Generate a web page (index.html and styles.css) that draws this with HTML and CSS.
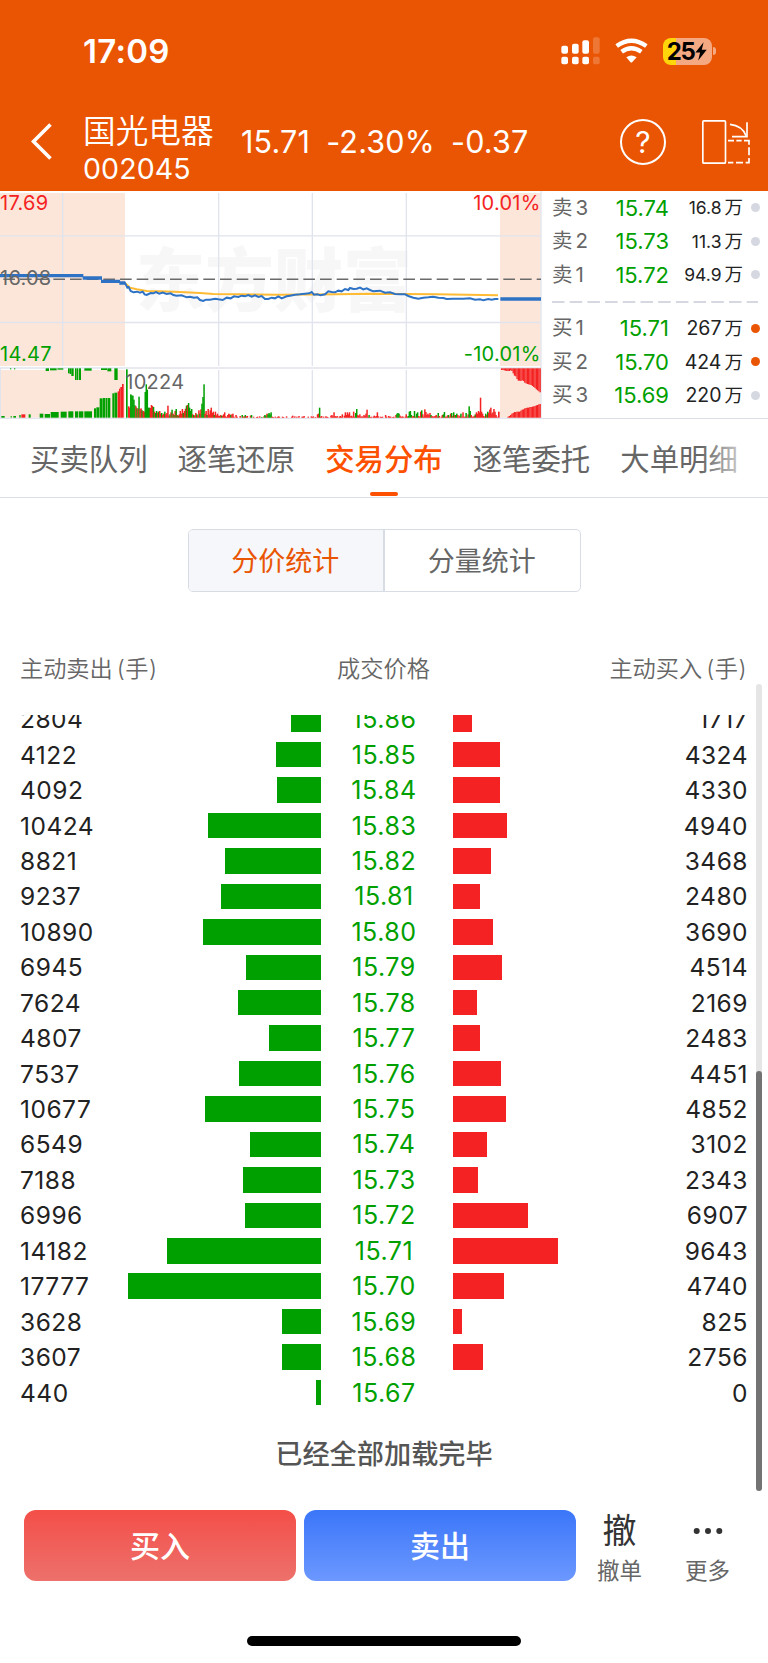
FILE: index.html
```html
<!DOCTYPE html>
<html lang="zh-CN">
<head>
  <meta charset="UTF-8" />
  <meta name="viewport" content="width=device-width, initial-scale=1.0" />
  <title>国光电器 002045</title>
  <link rel="stylesheet" href="styles.css">
</head>
<body>
  <div class="app">
    <header class="header">
      <div class="status-bar">
        <span class="time">17:09</span>
        <div class="status-icons">
          <svg class="signal" viewBox="532 112 117 84">
            <g fill="#fff">
              <rect x="533" y="138" width="20" height="24" rx="6" />
              <rect x="565" y="132" width="20" height="30" rx="6" />
              <rect x="596" y="122" width="20" height="40" rx="6" />
              <rect x="533" y="171" width="20" height="23" rx="6" />
              <rect x="565" y="171" width="20" height="23" rx="6" />
              <rect x="596" y="171" width="20" height="23" rx="6" />
            </g>
            <g fill="#fff" opacity="0.2">
              <rect x="628" y="113" width="20" height="49" rx="6" />
              <rect x="628" y="171" width="20" height="23" rx="6" />
            </g>
          </svg>
          <svg class="wifi" viewBox="692 112 99 84">
            <g fill="none" stroke="#fff" stroke-width="13">
              <path d="M697 139 Q741 107 786 139" />
              <path d="M712 156 Q741 135 771 156" />
            </g>
            <path d="M726 173 Q741 162 757 173 L744 187 Q741 190 738 187 Z" fill="#fff" />
          </svg>
          <div class="battery">
            <span class="battery-body"><span class="battery-num">25</span>
              <svg class="bolt" viewBox="0 0 12 19"><path d="M8.6 0.3 L0.4 10.4 H5.1 L3.2 18.6 L11.7 7.7 H6.8 Z" /></svg>
            </span>
            <span class="battery-tip"></span>
          </div>
        </div>
      </div>
      <div class="nav-bar">
        <svg class="back" viewBox="0 0 22 38"><path d="M19.5 1.5 L2.5 18.5 L19.5 35.5" /></svg>
        <div class="stock">
          <div class="stock-name">国光电器</div>
          <div class="stock-code">002045</div>
        </div>
        <div class="quote">
          <span class="q-price">15.71</span>
          <span class="q-pct">-2.30%</span>
          <span class="q-diff">-0.37</span>
        </div>
        <span class="help">?</span>
        <svg class="rotate" viewBox="948 352 156 144">
          <g fill="none" stroke="#fff" stroke-width="5">
            <rect x="956.500" y="360.500" width="68" height="127" rx="3" />
            <path d="M1038 371 Q1075 375 1086 405" />
            <path d="M1089 365 V408 H1044" />
            <path d="M1032 420 H1050 M1057 420 H1073 M1080 420 H1095 V432 M1095 440 V464 M1095 472 V486 H1085 M1077 486 H1056 M1048 486 H1032" />
          </g>
        </svg>
      </div>
    </header>

    <section class="market">
      <svg class="chart" id="chart" viewBox="0 18 1626 684">
        <rect x="0" y="24" width="375" height="519" fill="#fce6da" />
        <rect x="1500" y="24" width="122" height="519" fill="#fce6da" />
        <rect x="0" y="555" width="375" height="143" fill="#fce6da" />
        <rect x="1500" y="549" width="122" height="149" fill="#fce6da" />
        <text class="watermark" x="408" y="364">东方财富</text>
        <g class="grid">
          <path d="M0 152.500 H1623 M0 412.500 H1623 M0 549 H1623 M0 700 H1626" />
          <path d="M188 24 V543 M656 24 V543 M937 24 V543 M1219 24 V543" />
          <path d="M656 555 V698 M937 555 V698 M1219 555 V698 M1623 18 V700 M1 549 V700" />
        </g>
        <path class="mid" d="M10 282.500 H1623" />
        <path class="avg" d="M375 294 L390 308 410 313 440 318 480 319 540 321 600 324 640 327 720 328 840 329 1010 328 1110 326 1310 328 1494 331" />
        <path class="pre" d="M0 272 H250 M248 279 H306 M303 289 H360 M358 294 H376" />
        <path class="price" d="M374 292 L382 308 386 306 392 318 400 322 412 320 420 323 428 320 434 328 440 330 452 324 460 325 468 321 478 326 488 323 500 327 512 325 520 330 530 332 545 331 560 337 570 335 582 338 592 337 600 345 610 348 618 344 630 344 645 341 655 343 668 345 680 338 692 340 702 334 715 336 725 332 735 334 745 330 755 335 765 331 775 336 785 333 795 342 805 342 815 338 825 340 835 334 845 340 860 334 870 332 885 329 900 328 915 326 928 325 935 321 942 329 952 328 962 331 975 328 985 319 995 321 1005 322 1015 317 1025 319 1035 312 1045 315 1050 309 1060 312 1070 311 1080 308 1090 313 1100 310 1110 315 1120 319 1140 317 1155 323 1170 322 1185 327 1200 328 1215 328 1225 333 1240 338 1255 341 1270 338 1285 337 1300 335 1315 338 1330 339 1340 342 1360 341 1390 341 1410 340 1425 344 1440 343 1450 346 1465 342 1475 344 1485 342 1495 342" />
        <path class="post" d="M1501 342 H1623" />
        <g id="volume"></g>
        <text class="lbl up" x="0" y="74">17.69</text>
        <text class="lbl flat" x="0" y="300">16.08</text>
        <text class="lbl down" x="0" y="527">14.47</text>
        <text class="lbl up" x="1622" y="74" text-anchor="end">10.01%</text>
        <text class="lbl down" x="1622" y="527" text-anchor="end">-10.01%</text>
        <text class="lbl flat" x="376" y="611">10224</text>
      </svg>
      <div class="book">
        <div class="book-row"><span class="side">卖<i>3</i></span><span class="bp">15.74</span><span class="bv small">16.8<i>万</i></span><b class="dot"></b></div>
        <div class="book-row"><span class="side">卖<i>2</i></span><span class="bp">15.73</span><span class="bv small">11.3<i>万</i></span><b class="dot"></b></div>
        <div class="book-row"><span class="side">卖<i>1</i></span><span class="bp">15.72</span><span class="bv small">94.9<i>万</i></span><b class="dot"></b></div>
        <svg class="book-line" viewBox="0 0 207 20"><path d="M0 10 H206" /></svg>
        <div class="book-row"><span class="side">买<i>1</i></span><span class="bp">15.71</span><span class="bv">267<i>万</i></span><b class="dot on"></b></div>
        <div class="book-row"><span class="side">买<i>2</i></span><span class="bp">15.70</span><span class="bv">424<i>万</i></span><b class="dot on"></b></div>
        <div class="book-row"><span class="side">买<i>3</i></span><span class="bp">15.69</span><span class="bv">220<i>万</i></span><b class="dot"></b></div>
      </div>
    </section>

    <nav class="tabs">
      <span class="tab">买卖队列</span>
      <span class="tab">逐笔还原</span>
      <span class="tab active">交易分布</span>
      <span class="tab">逐笔委托</span>
      <span class="tab">大单明细</span>
    </nav>

    <div class="segment">
      <span class="seg active">分价统计</span>
      <span class="seg">分量统计</span>
    </div>

    <main class="dist">
      <div class="dist-head">
        <span>主动卖出<em>(手)</em></span>
        <span>成交价格</span>
        <span>主动买入<em>(手)</em></span>
      </div>
      <div class="dist-list">
        <div class="dist-rows" id="rows"></div>
      </div>
      <p class="loaded">已经全部加载完毕</p>
      <div class="scrollbar"><div class="thumb"></div></div>
    </main>

    <footer class="actions">
      <div class="btn buy">买入</div>
      <div class="btn sell">卖出</div>
      <div class="action"><span class="action-icon">撤</span><span>撤单</span></div>
      <div class="action more">
        <svg class="dots" viewBox="0 0 30 40"><circle cx="3.700" cy="20" r="3" /><circle cx="15" cy="20" r="3" /><circle cx="26.300" cy="20" r="3" /></svg>
        <span>更多</span>
      </div>
    </footer>
    <div class="home-bar"></div>
  </div>
  <script src="script.js"></script>
</body>
</html>
```
FILE: styles.css
```css
body {
  margin: 0;
  background: #fff;
  font-family: Inter, 'Noto Sans CJK SC', sans-serif;
  color: #222;
}

.app {
  width: 768px;
  height: 1663px;
  overflow: hidden;
  display: flex;
  flex-direction: column;
}

.header {
  height: 190.500px;
  flex: none;
  background: #ea5504;
  color: #fff;
}

.status-bar {
  height: 102px;
  box-sizing: border-box;
  padding: 0 52px 0 83px;
  display: flex;
  justify-content: space-between;
  align-items: center;
}

.time {
  font-size: 33px;
  font-weight: 600;
  letter-spacing: 0.3px;
}

.status-icons {
  display: flex;
  align-items: center;
}

.signal {
  width: 39px;
  height: 28px;
  margin-right: 15px;
}

.wifi {
  width: 33px;
  height: 28px;
  margin-right: 14.500px;
}

.battery {
  display: flex;
  align-items: center;
  gap: 1.500px;
}

.battery-body {
  width: 49px;
  height: 27px;
  border-radius: 8px;
  background: linear-gradient(90deg, #ffd60a 13px, #f5a982 13px);
  display: flex;
  align-items: center;
  justify-content: center;
  color: #000;
}

.battery-num {
  font-size: 24px;
  font-weight: 700;
  letter-spacing: -1.500px;
}

.bolt {
  width: 12px;
  height: 19px;
  margin-left: 1px;
}

.battery-tip {
  width: 3px;
  height: 8px;
  border-radius: 0 4px 4px 0;
  background: #f5a982;
}

.nav-bar {
  height: 88px;
  display: flex;
  align-items: center;
}

.back {
  width: 22px;
  height: 38px;
  margin: -8px 30px 0 31px;
  fill: none;
  stroke: #fff;
  stroke-width: 3.600;
}

.stock {
  width: 158px;
  margin-top: 6px;
}

.stock-name {
  font-size: 32.700px;
  line-height: 40px;
  font-weight: 350;
}

.stock-code {
  font-size: 28.500px;
  line-height: 36px;
  letter-spacing: 0.1px;
}

.quote {
  display: flex;
  gap: 16px;
  width: 379px;
  margin-top: -9px;
  font-size: 30.500px;
  letter-spacing: 0.2px;
}

.help {
  width: 42px;
  height: 42px;
  border: 2px solid #fff;
  border-radius: 50%;
  text-align: center;
  font-size: 30px;
  line-height: 42px;
  margin: -9px 34px 0 0;
}

.rotate {
  width: 52px;
  height: 48px;
  margin-top: -9px;
}

.market {
  height: 228.500px;
  flex: none;
  display: flex;
}

.chart {
  width: 542px;
  height: 228px;
  flex: none;
}

.grid path {
  fill: none;
  stroke: #e1e4ec;
  stroke-width: 4;
}

.mid {
  stroke: #6a6a6a;
  stroke-width: 4.500;
  stroke-dasharray: 35 15;
}

.avg, .price, .pre, .post {
  fill: none;
  stroke: #2d72c4;
  stroke-width: 6;
}

.avg {
  stroke: #ffbb33;
}

.pre {
  stroke-width: 10;
}

.post {
  stroke-width: 11;
}

.watermark {
  font-family: 'Noto Sans CJK SC', sans-serif;
  font-weight: 900;
  font-size: 207px;
  fill: #f7f7f8;
}

.lbl {
  font-size: 60px;
  letter-spacing: 0.8px;
}

.lbl.up {
  fill: #f42222;
}

.lbl.down {
  fill: #00a000;
}

.lbl.flat {
  fill: #666;
}

.book {
  flex: 1;
  box-sizing: border-box;
  padding: 0.500px 8px 0 10px;
  border-bottom: 1px solid #dcdfe6;
}

.book-row {
  height: 33.500px;
  display: flex;
  align-items: center;
}

.side {
  width: 44px;
  font-size: 20.500px;
  line-height: 28px;
  color: #666;
}

.side i {
  font-style: normal;
  margin-left: 3px;
}

.bp {
  width: 73px;
  font-size: 22px;
  text-align: right;
  color: #00a000;
}

.bv {
  width: 74px;
  font-size: 19.500px;
  line-height: 28px;
  text-align: right;
  color: #222;
}

.bv.small {
  font-size: 17.500px;
}

.bv i {
  font-style: normal;
  font-size: 18.500px;
  margin-left: 3px;
}

.dot {
  width: 9px;
  height: 9px;
  margin-left: 8px;
  border-radius: 50%;
  background: #d5d8e0;
}

.dot.on {
  background: #ea5504;
}

.book-line {
  display: block;
  width: 207px;
  height: 20px;
  stroke: #d5d8e0;
  stroke-width: 2;
  stroke-dasharray: 12.500 5.200;
}

.tabs {
  height: 79px;
  box-sizing: border-box;
  flex: none;
  display: flex;
  gap: 30px;
  padding-left: 30px;
  border-bottom: 1.500px solid #dcdfe6;
  font-size: 29.400px;
  line-height: 82px;
  color: #666;
  white-space: nowrap;
  position: relative;
}

.tabs::after {
  content: "";
  position: absolute;
  top: 0;
  right: 0;
  width: 68px;
  height: 77px;
  background: linear-gradient(90deg, rgba(255,255,255,0), #fff 90%);
}

.tab {
  position: relative;
}

.tab.active {
  color: #fd5000;
  font-weight: 500;
}

.tab.active::after {
  content: "";
  position: absolute;
  left: 45px;
  top: 73px;
  width: 28px;
  height: 4px;
  border-radius: 2px;
  background: #fd5000;
}

.segment {
  width: 393px;
  height: 63px;
  box-sizing: border-box;
  flex: none;
  margin: 31px auto 0;
  display: flex;
  border: 1.500px solid #d8dce4;
  border-radius: 5px;
  overflow: hidden;
}

.seg {
  flex: 1;
  font-size: 27px;
  line-height: 63px;
  text-align: center;
  text-indent: -1px;
  color: #666;
}

.seg.active {
  color: #ea5504;
  background: #f6f7fa;
  border-right: 2px solid #d8dce4;
}

.dist {
  height: 899px;
  flex: none;
  position: relative;
}

.dist-head {
  height: 123px;
  box-sizing: border-box;
  padding: 59px 21px 0 20px;
  display: grid;
  grid-template-columns: 1fr 1fr 1fr;
  font-size: 23.200px;
  line-height: 36px;
  font-weight: 350;
  color: #666;
}

.dist-head span:nth-child(2) {
  text-align: center;
}

.dist-head span:nth-child(3) {
  text-align: right;
}

.dist-head em {
  font-style: normal;
  margin-left: 4px;
  letter-spacing: 0.5px;
}

.dist-list {
  height: 693px;
  overflow: hidden;
}

.dist-rows {
  margin-top: -13.500px;
}

.dist-row {
  height: 35.440px;
  display: grid;
  grid-template-columns: 101px 200px 132px 200px 95px;
  padding: 0 20px;
  align-items: center;
  font-size: 24.500px;
  letter-spacing: 0.500px;
}

.bar {
  height: 25.500px;
}

.bar.out {
  background: #00a000;
  justify-self: end;
}

.bar.in {
  background: #f42222;
}

.dist-row .p {
  font-size: 25px;
  text-align: center;
  color: #00a000;
  padding-right: 6px;
}

.dist-row .r {
  text-align: right;
}

.loaded {
  margin: 28px 0 0;
  font-size: 27.200px;
  line-height: 37px;
  text-align: center;
  font-weight: 500;
  color: #555;
}

.scrollbar {
  position: absolute;
  right: 6px;
  top: 92px;
  width: 6px;
  height: 807px;
  border-radius: 3px;
  background: #e5e5e5;
}

.thumb {
  height: 420px;
  margin-top: 387px;
  border-radius: 3px;
  background: #737373;
}

.actions {
  flex: none;
  height: 72px;
  margin-top: 18.500px;
  padding-left: 24px;
  display: flex;
}

.btn {
  width: 272px;
  height: 71px;
  margin-right: 8px;
  border-radius: 12px;
  color: #fff;
  font-size: 30px;
  font-weight: 500;
  line-height: 72px;
  text-align: center;
}

.buy {
  background: linear-gradient(#f44e48, #ed716c);
}

.sell {
  background: linear-gradient(#3b76f9, #6c98ff);
}

.action {
  width: 71px;
  display: flex;
  flex-direction: column;
  align-items: center;
  font-size: 22.500px;
  line-height: 40px;
  color: #666;
}

.more {
  margin-left: 17px;
}

.action-icon {
  margin-top: 1px;
  font-size: 34px;
  color: #333;
}

.dots {
  flex: none;
  width: 30px;
  height: 40px;
  margin-top: 1px;
  fill: #333;
}

.home-bar {
  flex: none;
  width: 274px;
  height: 10px;
  margin: 54px auto 0;
  border-radius: 5px;
  background: #000;
}
```
FILE: script.js
```js
const rows = [
  [2804, '15.86', 1717], [4122, '15.85', 4324], [4092, '15.84', 4330],
  [10424, '15.83', 4940], [8821, '15.82', 3468], [9237, '15.81', 2480],
  [10890, '15.80', 3690], [6945, '15.79', 4514], [7624, '15.78', 2169],
  [4807, '15.77', 2483], [7537, '15.76', 4451], [10677, '15.75', 4852],
  [6549, '15.74', 3102], [7188, '15.73', 2343], [6996, '15.72', 6907],
  [14182, '15.71', 9643], [17777, '15.70', 4740], [3628, '15.69', 825],
  [3607, '15.68', 2756], [440, '15.67', 0]
];
const scale = 0.01084;

document.getElementById('rows').innerHTML = rows.map(([out, price, inn]) => `
  <div class="dist-row">
    <span>${out}</span>
    <div class="bar out" style="width:${(out * scale).toFixed(1)}px"></div>
    <span class="p">${price}</span>
    <div class="bar in" style="width:${(inn * scale).toFixed(1)}px"></div>
    <span class="r">${inn}</span>
  </div>`).join('');

const GREEN = '#00a000';
const RED = '#f42222';
let svg = '';

function bar(x, w, h, color, fromTop) {
  const y = fromTop ? 550 : 698 - h;
  svg += `<rect x="${x}" y="${y}" width="${w}" height="${h}" fill="${color}"/>`;
}

// call auction: x, width, height
[[4, 10, 5], [32, 3, 5], [40, 8, 5], [58, 4, 8], [86, 6, 10], [119, 11, 12], [134, 16, 11],
 [152, 24, 17], [182, 18, 18], [205, 15, 19], [225, 10, 19], [237, 13, 19], [253, 23, 19],
 [282, 6, 28], [289, 9, 31], [299, 9, 58], [309, 7, 59], [317, 5, 59], [323, 8, 59],
 [337, 5, 73], [343, 9, 75], [378, 5, 145]].forEach(b => bar(...b, GREEN));
[[64, 12, 10], [353, 4, 79], [357, 4, 87], [361, 5, 92], [366, 5, 101]].forEach(b => bar(...b, RED));
[[30, 4, 3], [42, 4, 3], [137, 10, 8], [150, 20, 6], [172, 18, 4], [204, 5, 15], [209, 5, 17],
 [214, 7, 23], [225, 5, 35], [231, 4, 35], [237, 6, 35], [253, 22, 7], [303, 18, 5], [322, 12, 9],
 [343, 10, 35]].forEach(b => bar(...b, GREEN, true));

// continuous trading, negative = green
const vol = [
  34, 30, -70, -67, -66, -54, -37, 34, -28, 28, -63, 26, 28, -22, 20, 18, -77, -100, -84, -30,
  -30, 29, 38, 35, -32, 18, -14, -20, 15, -18, 20, 12, -14, 8, 12, -18, 10, 14, 36, 6,
  -10, 16, -24, 12, -8, 20, -26, 8, -6, 10, 20, 12, 26, -14, 20, 27, -36, 38, -44, -30,
  -20, -26, 10, -8, 6, 14, -10, 7, 22, -12, 25, -42, -62, -100, 12, 20, -8, 26, 10, 22,
  30, 14, 18, -8, 18, 7, 12, 6, 5, 8, -6, 6, 10, 16, 4, 2, 8, 12, 10, -8,
  10, 12, 3, 0, 8, 3, 0, 0, 5, 0, -8, 3, 4, -8, 4, 5, 0, 0, 6, -8,
  0, 3, 0, 0, 2, 3, 0, 4, 0, -2, 0, 4, -8, -6, 12, -10, -14, -10, -16, 3,
  2, 0, 3, 0, 2, 4, 3, 0, 0, 3, 2, 0, 0, 4, 0, 0, 0, 0, 3, 6,
  0, 4, 0, 3, 0, 5, 0, 0, 3, 3, 5, 0, 0, 0, 3, 0, 0, 4, 2, 4,
  0, 2, 0, 10, 12, -30, 3, 5, 0, 3, 0, 4, 3, 2, 0, 0, 6, 8, 4, 16,
  5, 3, 5, 0, 3, 5, 3, 10, 0, 6, 16, 8, 16, 10, 16, 4, 6, 3, 18, 3,
  -14, -26, 8, 5, 10, 3, 4, 3, 8, 5, 12, 24, 3, -8, 2, 3, 0, 3, 6, 3,
  5, 16, 4, 0, 3, 2, 3, 0, 0, 8, 3, 0, 5, 3, 3, 0, 2, 3, 0, 8,
  -12, -14, -12, 6, 2, 4, 3, 0, 3, 10, 3, -5, -18, -20, -8, 4, 5, -20, 3, -12,
  -16, 5, 3, 18, -22, 10, 3, 25, 17, 8, 12, 8, 14, -8, 5, 3, 4, 5, 8, 3,
  -14, 5, 0, 3, 8, -10, -17, 3, 3, 7, -8, 3, 12, -14, 5, -16, 8, -8, -12, 8,
  3, 6, -12, 3, 16, 3, 3, -14, 3, 10, -34, -20, 8, 3, 3, 6, -10, 16, 12, 20,
  16, 60, 18, 12, 5, 3, -12, 8, -18, 14, 24, 30, 12, 16, 26, 18, 8, 3
];
const end = 1492;
const step = (end - 384) / vol.length;
vol.forEach((v, i) => {
  if (v) bar((384 + i * step).toFixed(1), 4.5, Math.abs(v), v < 0 ? GREEN : RED);
});
bar(1494, 5, 18, RED);

// closing auction
const upper = [5, 5, 6, 7, 8, 8, 8, 6, 8, 15, 22, 24, 32, 37, 37, 38, 36, 38, 43, 45, 47, 48, 49, 50, 53, 56, 59, 63, 66, 69, 72];
const lower = [0, 0, 0, 0, 0, 3, 5, 8, 12, 14, 17, 17, 18, 18, 18, 21, 24, 25, 28, 29, 30, 30, 32, 32, 33, 34, 35, 37, 38, 40, 41];
upper.forEach((h, i) => bar(1503 + i * 3.85, 4, h, RED, true));
lower.forEach((h, i) => h && bar(1503 + i * 3.85, 4, h, RED));

document.getElementById('volume').innerHTML = svg;
```
